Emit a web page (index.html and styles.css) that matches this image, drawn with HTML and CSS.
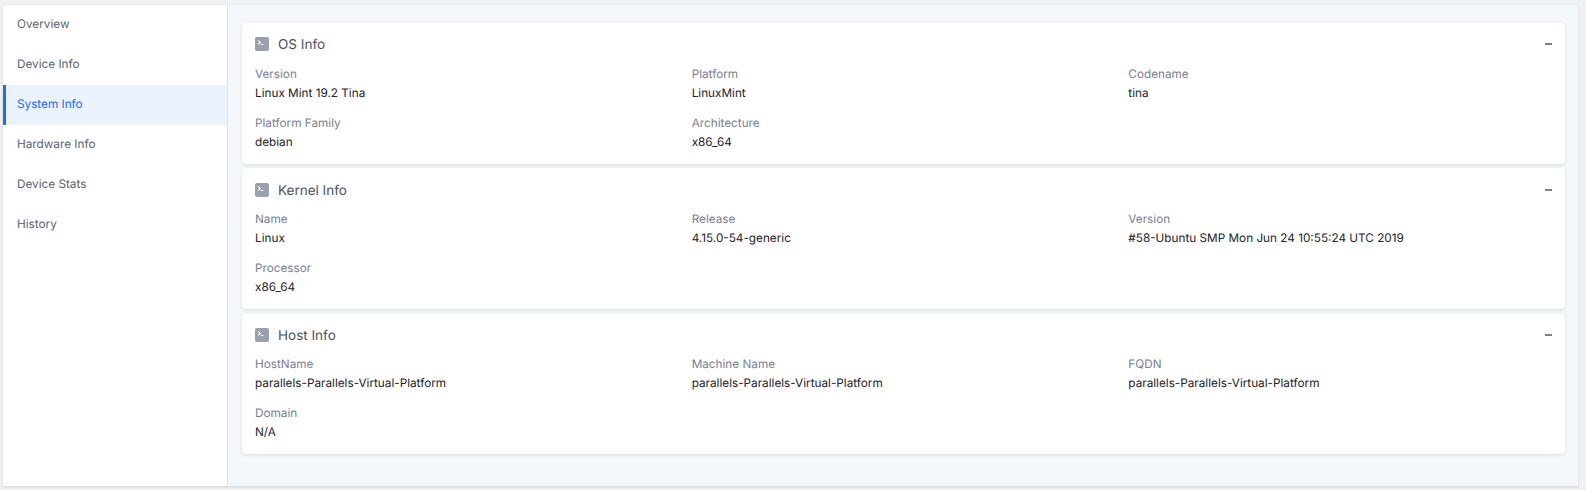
FILE: index.html
```html
<!DOCTYPE html>
<html lang="en">
<head>
<meta charset="utf-8">
<title>System Info</title>
<link rel="stylesheet" href="styles.css">
</head>
<body>
<div class="shell">
  <nav class="side">
    <a class="item">Overview</a>
    <a class="item">Device Info</a>
    <a class="item active">System Info</a>
    <a class="item">Hardware Info</a>
    <a class="item">Device Stats</a>
    <a class="item">History</a>
  </nav>
  <main class="main">
    <section class="card">
      <header class="head">
        <svg class="icon" viewBox="0 0 14 14"><rect width="14" height="14" rx="2" fill="#9aa1ad"/><path d="M3 3.4 5.4 5.4 3 7.4" fill="none" stroke="#fff" stroke-width="1.1"/><path d="M5.8 7.5H8.4" stroke="#fff" stroke-width="1.1"/></svg>
        <h2 class="title">OS Info</h2>
        <span class="minus"></span>
      </header>
      <div class="grid">
        <div class="field"><div class="label">Version</div><div class="value">Linux Mint 19.2 Tina</div></div>
        <div class="field"><div class="label">Platform</div><div class="value">LinuxMint</div></div>
        <div class="field"><div class="label">Codename</div><div class="value">tina</div></div>
        <div class="field"><div class="label">Platform Family</div><div class="value">debian</div></div>
        <div class="field"><div class="label">Architecture</div><div class="value">x86_64</div></div>
      </div>
    </section>
    <section class="card">
      <header class="head">
        <svg class="icon" viewBox="0 0 14 14"><rect width="14" height="14" rx="2" fill="#9aa1ad"/><path d="M3 3.4 5.4 5.4 3 7.4" fill="none" stroke="#fff" stroke-width="1.1"/><path d="M5.8 7.5H8.4" stroke="#fff" stroke-width="1.1"/></svg>
        <h2 class="title">Kernel Info</h2>
        <span class="minus"></span>
      </header>
      <div class="grid">
        <div class="field"><div class="label">Name</div><div class="value">Linux</div></div>
        <div class="field"><div class="label">Release</div><div class="value">4.15.0-54-generic</div></div>
        <div class="field"><div class="label">Version</div><div class="value">#58-Ubuntu SMP Mon Jun 24 10:55:24 UTC 2019</div></div>
        <div class="field"><div class="label">Processor</div><div class="value">x86_64</div></div>
      </div>
    </section>
    <section class="card">
      <header class="head">
        <svg class="icon" viewBox="0 0 14 14"><rect width="14" height="14" rx="2" fill="#9aa1ad"/><path d="M3 3.4 5.4 5.4 3 7.4" fill="none" stroke="#fff" stroke-width="1.1"/><path d="M5.8 7.5H8.4" stroke="#fff" stroke-width="1.1"/></svg>
        <h2 class="title">Host Info</h2>
        <span class="minus"></span>
      </header>
      <div class="grid">
        <div class="field"><div class="label">HostName</div><div class="value">parallels-Parallels-Virtual-Platform</div></div>
        <div class="field"><div class="label">Machine Name</div><div class="value">parallels-Parallels-Virtual-Platform</div></div>
        <div class="field"><div class="label">FQDN</div><div class="value">parallels-Parallels-Virtual-Platform</div></div>
        <div class="field"><div class="label">Domain</div><div class="value">N/A</div></div>
      </div>
    </section>
  </main>
</div>
</body>
</html>
```
FILE: styles.css
```css
* { box-sizing: border-box; }
html, body { margin: 0; height: 100%; }
body {
  background: #eff1f3;
  font-family: Inter, "Liberation Sans", sans-serif;
  font-size: 11.75px;
  text-rendering: geometricPrecision;
  padding: 5px 8px 4px 3px;
  overflow: hidden;
}
.shell {
  display: flex;
  height: 481px;
  background: #f4f7fa;
  border-radius: 2px;
  box-shadow: 0 1px 3px rgba(60, 70, 90, .18);
  overflow: hidden;
}
.side {
  width: 225px;
  flex: none;
  background: #fff;
  border-right: 1px solid #dfe3e8;
}
.item {
  display: flex;
  align-items: center;
  height: 40px;
  padding: 0 0 3px 11px;
  border-left: 3px solid transparent;
  color: #5c6370;
}
.item.active {
  background: #eaf2fb;
  border-left-color: #1a6ef5;
  color: #1a6ef5;
}
.main {
  flex: 1;
  padding: 18px 13px 0 14px;
  display: flex;
  flex-direction: column;
  gap: 4px;
}
.card {
  height: 141px;
  background: #fff;
  border-radius: 4px;
  box-shadow: 0 1px 3px rgba(60, 70, 90, .16);
  padding: 0 0 0 13px;
}
.head {
  display: flex;
  align-items: center;
  height: 42px;
  padding-right: 13px;
}
.card + .card .head { padding-top: 2px; }
.card:last-child { margin-top: 1px; height: 140px; }
.card:last-child .head { height: 41px; padding-top: 1px; }
.icon { width: 14px; height: 14px; flex: none; margin-right: 9px; }
.title {
  margin: 0;
  flex: 1;
  padding-top: 2px;
  font-size: 13.5px;
  font-weight: 400;
  color: #4b5260;
}
.minus { width: 7px; height: 2px; background: #7c7f85; }
.grid {
  display: grid;
  grid-template-columns: repeat(3, 1fr);
  row-gap: 11px;
}
.field { height: 38px; }
.label { color: #7a8190; line-height: 18px; height: 19px; }
.value { color: #1e2229; line-height: 18px; }
```
